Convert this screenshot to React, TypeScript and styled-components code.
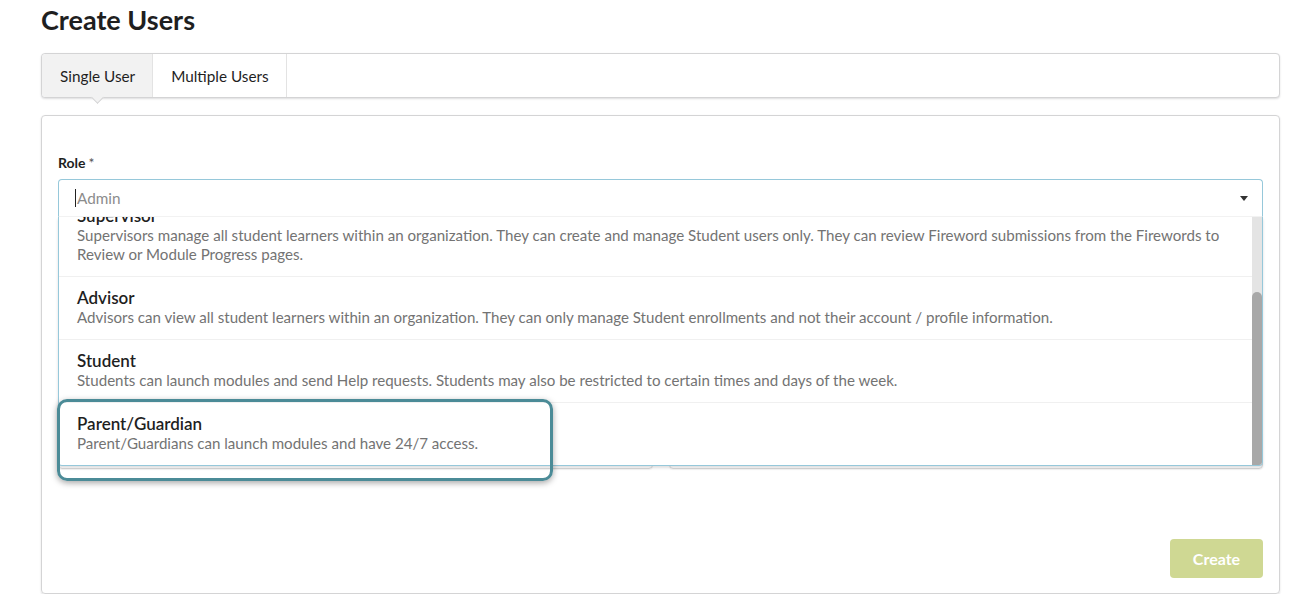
import React from 'react'
import styled, { createGlobalStyle } from 'styled-components'

const GlobalStyle = createGlobalStyle`
  html, body {
    margin: 0;
    padding: 0;
    background: #ffffff;
    font-family: Lato, "Open Sans", "Liberation Sans", sans-serif;
    color: #212121;
  }
`

const roles = [
  {
    name: 'Supervisor',
    text: 'Supervisors manage all student learners within an organization. They can create and manage Student users only. They can review Fireword submissions from the Firewords to Review or Module Progress pages.',
  },
  {
    name: 'Advisor',
    text: 'Advisors can view all student learners within an organization. They can only manage Student enrollments and not their account / profile information.',
  },
  {
    name: 'Student',
    text: 'Students can launch modules and send Help requests. Students may also be restricted to certain times and days of the week.',
  },
  {
    name: 'Parent/Guardian',
    text: 'Parent/Guardians can launch modules and have 24/7 access.',
  },
]

const Page = styled.div`
  padding: 0 26px 0 41px;
`

const Title = styled.h1`
  margin: 0;
  padding-top: 3px;
  font-size: 27px;
  line-height: 34px;
  font-weight: 700;
  color: #1f1f1f;
`

const TabMenu = styled.div`
  display: flex;
  margin-top: 16px;
  height: 43px;
  border: 1px solid #d4d4d5;
  border-radius: 4px;
  box-shadow: 0 1px 2px rgba(34, 36, 38, 0.15);
  background: #fff;
`

const Tab = styled.div<{ $active?: boolean }>`
  position: relative;
  display: flex;
  align-items: center;
  padding: 0 17px 0 18px;
  font-size: 15.3px;
  color: #1f1f1f;
  border-right: 1px solid #e3e3e3;
  background: ${p => (p.$active ? '#f2f2f2' : '#fff')};
  border-radius: ${p => (p.$active ? '4px 0 0 4px' : '0')};

  &::after {
    content: '';
    display: ${p => (p.$active ? 'block' : 'none')};
    position: absolute;
    left: 50%;
    bottom: -5px;
    width: 8px;
    height: 8px;
    margin-left: -4px;
    background: #f2f2f2;
    border-right: 1px solid #d4d4d5;
    border-bottom: 1px solid #d4d4d5;
    transform: rotate(45deg);
  }
`

const Segment = styled.div`
  margin-top: 17px;
  border: 1px solid #d4d4d5;
  border-radius: 4px;
  box-shadow: 0 1px 2px rgba(34, 36, 38, 0.15);
  padding: 38px 16px 15px 16px;
`

const Label = styled.div`
  font-size: 14px;
  font-weight: 700;
  line-height: 18px;
  margin-bottom: 7px;
  color: #1f1f1f;

  span {
    font-weight: 400;
    color: #555;
    margin-left: 3px;
  }
`

const DropdownWrap = styled.div`
  position: relative;
  z-index: 5;
`

const DropdownField = styled.div`
  height: 36px;
  display: flex;
  align-items: center;
  justify-content: space-between;
  padding: 0 14px 0 16px;
  border: 1px solid #96c8da;
  border-bottom-color: #f3f3f3;
  border-radius: 4px 4px 0 0;
  background: #fff;
  font-size: 15.3px;
`

const Placeholder = styled.span`
  color: #8c8c8c;
  border-left: 1px solid #222;
  padding-left: 1px;
  line-height: 18px;
`

const Caret = styled.span`
  width: 0;
  height: 0;
  border-left: 4px solid transparent;
  border-right: 4px solid transparent;
  border-top: 5px solid #333;
  margin-top: 1px;
`

const Menu = styled.div`
  position: absolute;
  top: 38px;
  left: 0;
  right: 0;
  height: 248px;
  display: flex;
  background: #fff;
  border: 1px solid #96c8da;
  border-top: none;
  border-radius: 0 0 4px 4px;
  box-shadow: 0 2px 3px rgba(34, 36, 38, 0.15);
  overflow: hidden;
`

const MenuList = styled.div`
  flex: 1;
  display: flex;
  flex-direction: column;
  justify-content: flex-end;
  overflow: hidden;
`

const Item = styled.div`
  flex-shrink: 0;
  padding: 11px 16px 12px 18px;
  border-top: 1px solid #f0f0f0;
`

const ItemName = styled.div`
  font-size: 17px;
  line-height: 20px;
  font-weight: 600;
  color: #1f1f1f;
`

const ItemText = styled.div`
  font-size: 15.1px;
  line-height: 19px;
  color: #737373;
`

const ScrollTrack = styled.div`
  width: 10px;
  background: #e4e4e4;
  display: flex;
  flex-direction: column;
  justify-content: flex-end;
`

const ScrollThumb = styled.div`
  height: 173px;
  background: #a8a8a8;
  border-radius: 5px 5px 0 0;
`

const Highlight = styled.div`
  position: absolute;
  left: -1px;
  top: 220px;
  width: 490px;
  height: 76px;
  border: 3px solid #4b8b97;
  border-radius: 10px;
  box-shadow: 0 2px 6px rgba(0, 0, 0, 0.35);
  pointer-events: none;
`

const FieldRow = styled.div`
  display: grid;
  grid-template-columns: 1fr 1fr;
  gap: 16px;
  margin-top: 214px;
`

const Input = styled.div`
  height: 36px;
  border: 1px solid #d9d9d9;
  border-radius: 4px;
  box-shadow: 0 1px 1px rgba(0, 0, 0, 0.05);
`

const Actions = styled.div`
  display: flex;
  justify-content: flex-end;
  margin-top: 70px;
`

const CreateButton = styled.button`
  width: 93px;
  height: 39px;
  border: none;
  border-radius: 4px;
  background: #cfd893;
  color: #fff;
  font-family: Lato, "Open Sans", "Liberation Sans", sans-serif;
  font-size: 16px;
  font-weight: 700;
`

const App: React.FC = () => {
  return (
    <Page>
      <GlobalStyle />
      <Title>Create Users</Title>
      <TabMenu>
        <Tab $active>Single User</Tab>
        <Tab>Multiple Users</Tab>
      </TabMenu>
      <Segment>
        <Label>
          Role<span>*</span>
        </Label>
        <DropdownWrap>
          <DropdownField>
            <Placeholder>Admin</Placeholder>
            <Caret />
          </DropdownField>
          <Menu>
            <MenuList>
              {roles.map((r, i) => (
                <Item key={r.name} style={i === 0 ? { borderTop: 'none' } : undefined}>
                  <ItemName>{r.name}</ItemName>
                  <ItemText>{r.text}</ItemText>
                </Item>
              ))}
            </MenuList>
            <ScrollTrack>
              <ScrollThumb />
            </ScrollTrack>
          </Menu>
          <Highlight />
        </DropdownWrap>
        <FieldRow>
          <Input />
          <Input />
        </FieldRow>
        <Actions>
          <CreateButton>Create</CreateButton>
        </Actions>
      </Segment>
    </Page>
  )
}

export default App
